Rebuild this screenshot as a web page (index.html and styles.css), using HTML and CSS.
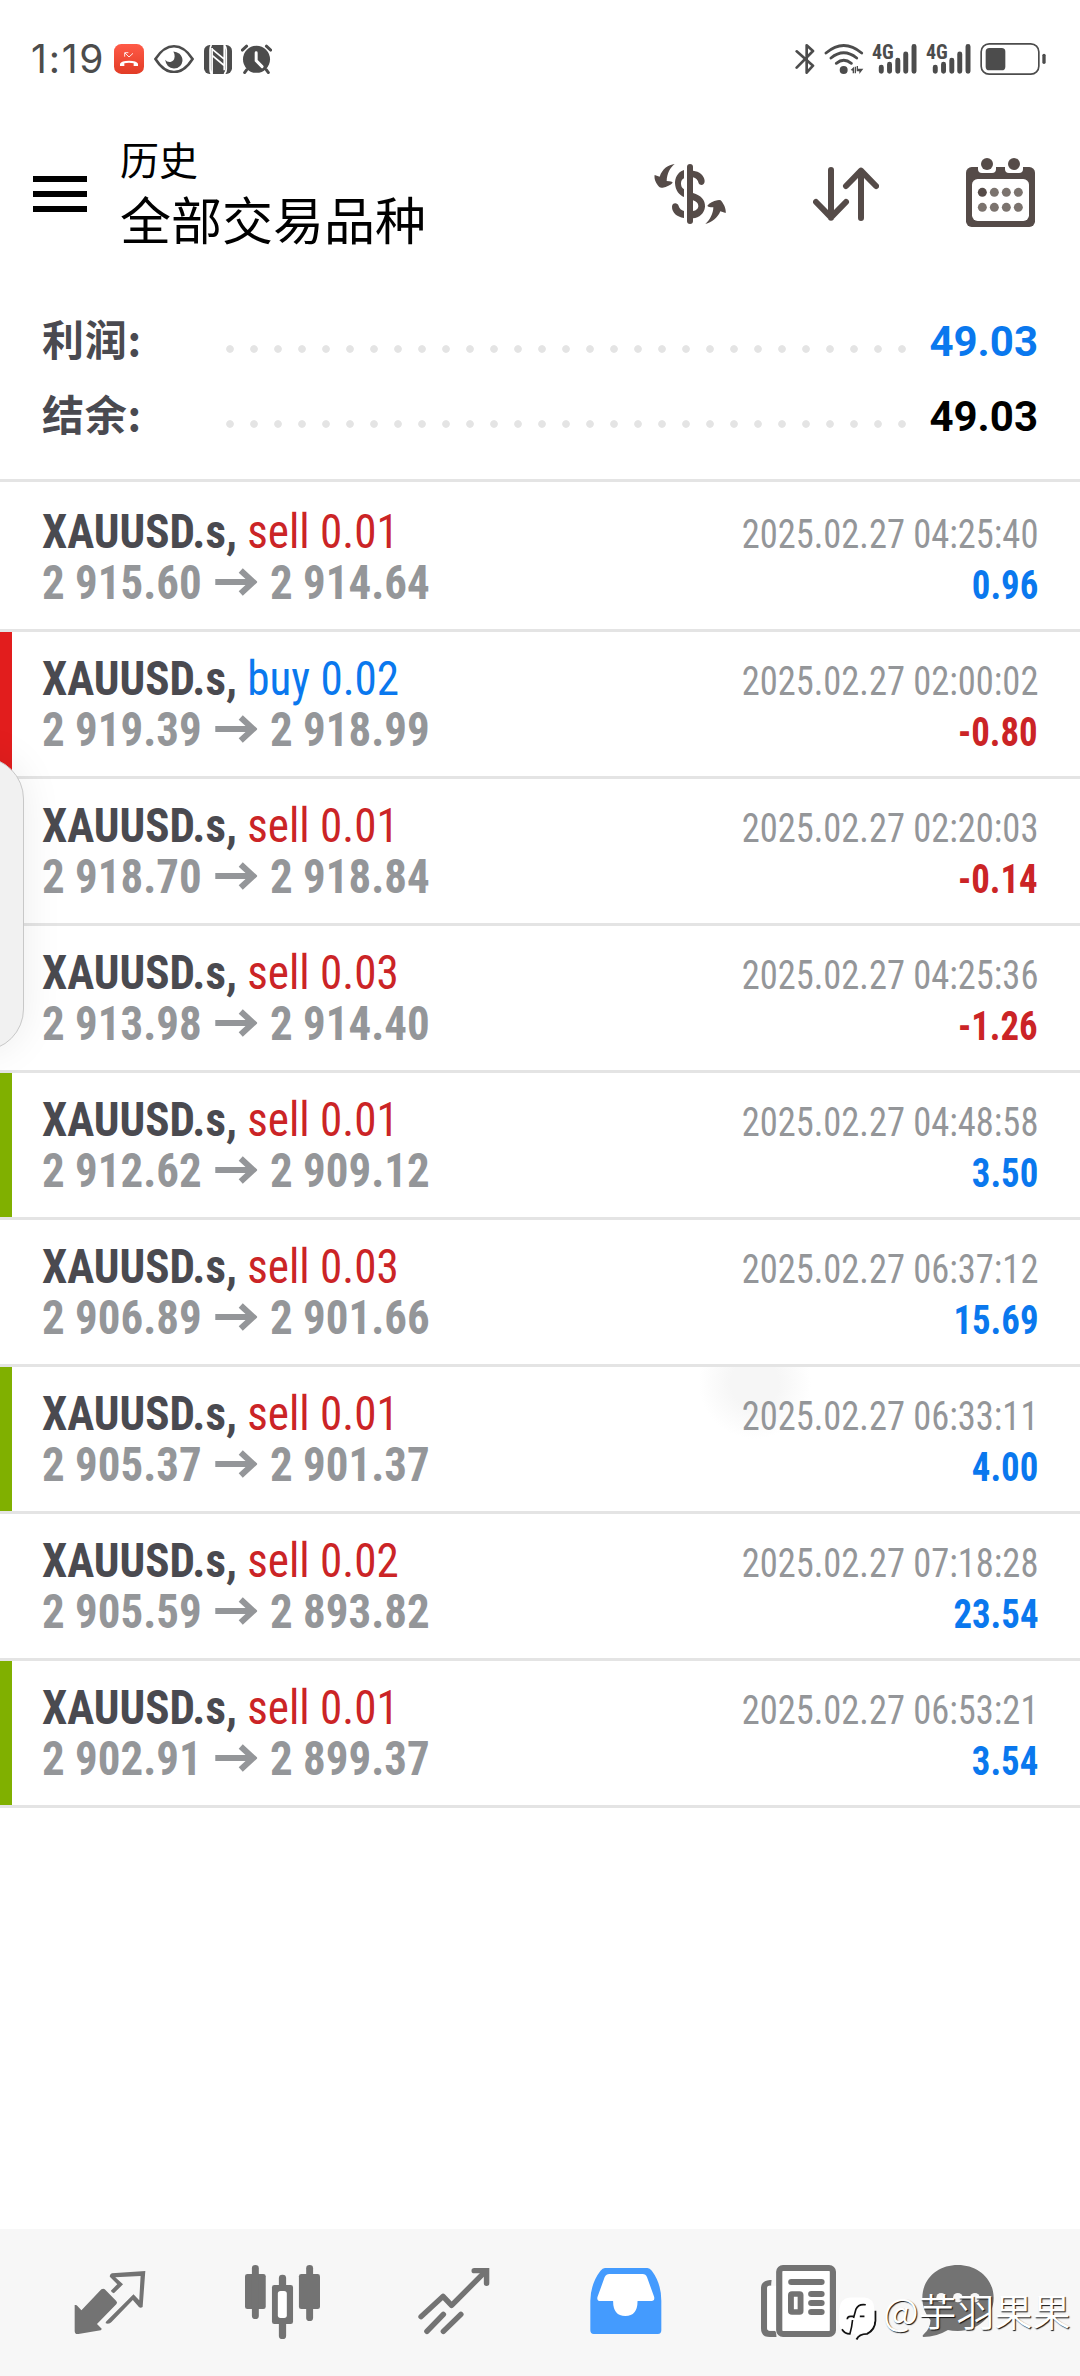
FILE: index.html
```
<!DOCTYPE html>
<html lang="zh-CN">
<head>
<meta charset="utf-8">
<title>历史</title>
<link rel="stylesheet" href="styles.css">
</head>
<body>
<svg class="defs"><symbol id="arrow" viewBox="0 0 42 28" preserveAspectRatio="none"><path d="M0 14h38M25.500 2.500L38 14 25.500 25.500"/></symbol></svg>
<div class="app">
  <div class="status">
    <span class="clock">1:19</span>
    <svg class="st-call" viewBox="282 42 90 90"><defs><linearGradient id="g" x2="0" y2="1"><stop stop-color="#ff5a47"/><stop offset="1" stop-color="#e23c26"/></linearGradient></defs><rect x="282" y="42" width="90" height="90" rx="22" fill="url(#g)"/><path d="M300 108v-7q4-9 27-9t27 9v7h-13v-8q-14-4-28 0v8z" fill="#fff"/><path d="M314 80V68h11M315 69l12 12 12-11" fill="none" stroke="#fff" stroke-width="2.6"/></svg>
    <svg class="st-eye" viewBox="401 43 122 86"><path d="M405 86Q430 47 462 47T519 86Q494 126 462 126T405 86Z" fill="none" stroke="#4c4c4c" stroke-width="8"/><path d="M460 63Q470 64 479 70Q489 80 488 92Q485 114 462 115Q438 113 435 88Q440 96 451 95Q463 92 464 78Q464 70 460 63Z" fill="#4c4c4c"/></svg>
    <svg class="st-nfc" viewBox="551 44 83 86"><rect x="551" y="44" width="83" height="86" rx="17" fill="#4c4c4c"/><path d="M573 44q-4 5-4 15v56q0 9 4 15M611 44q6 5 6 15v56q0 9-6 15M575 56l35 29M575 75l35 29M575 53v77M611 44v75" fill="none" stroke="#fff" stroke-width="5"/></svg>
    <svg class="st-alarm" viewBox="663 42 94 90"><circle cx="710" cy="88" r="41" fill="#4c4c4c"/><path d="M667 60l13-12M753 60l-13-12M680 120l-6 8M740 120l6 8" stroke="#4c4c4c" stroke-width="9" stroke-linecap="round"/><path d="M709 68v24l18 18" fill="none" stroke="#fff" stroke-width="9" stroke-linecap="round"/></svg>
    <span class="grow"></span>
    <svg class="st-bt" viewBox="523 69 60 96"><path d="M528 94l49 43-19 21v-82l19 17-49 50" fill="none" stroke="#4c4c4c" stroke-width="8" stroke-linecap="round" stroke-linejoin="round"/></svg>
    <svg class="st-wifi" viewBox="610 69 120 96"><g fill="none" stroke="#4c4c4c" stroke-width="8.5" stroke-linecap="round"><path d="M616 99q53-45 107 0M631 114q38-31 77 0M647 130q22-18 45 0"/></g><circle cx="669" cy="150" r="12" fill="#4c4c4c"/><path d="M690 150l10-10v20h-4v-8zM708 138h4v8h16l-12 16v-8h-8zM702 140h4v20h-4z" fill="#4c4c4c"/></svg>
    <svg class="st-sig" viewBox="754 69 136 96"><text class="net" x="754" y="117" textLength="66" lengthAdjust="spacingAndGlyphs">4G</text><g stroke="#4c4c4c" stroke-width="15" stroke-linecap="round"><path d="M782 142v12M807 133v21M832 121v33M856 102v52M881 79v75"/></g></svg>
    <svg class="st-sig" viewBox="754 69 136 96"><text class="net" x="754" y="117" textLength="66" lengthAdjust="spacingAndGlyphs">4G</text><g stroke="#4c4c4c" stroke-width="15" stroke-linecap="round"><path d="M782 142v12M807 133v21M832 121v33M856 102v52M881 79v75"/></g></svg>
    <svg class="st-bat" viewBox="1078 69 198 96"><rect x="1081.500" y="71.500" width="173" height="91" rx="24" fill="none" stroke="#4c4c4c" stroke-width="5"/><rect x="1095" y="84" width="59" height="67" rx="11" fill="#4c4c4c"/><rect x="1265" y="101" width="10" height="31" rx="5" fill="#4c4c4c"/></svg>
  </div>

  <header class="header">
    <div class="menu"><i></i><i></i><i></i></div>
    <div class="titles"><div class="sub">历史</div><div class="main">全部交易品种</div></div>
    <svg class="h-dollar" viewBox="102 432 216 180"><g fill="#554b48"><rect x="201" y="432" width="18" height="180" rx="9"/><path d="M192 450C171 457 165 475 165 490C166 512 178 526 192 531V508C185 504 183 497 183 490C183 482 187 477 192 475ZM219 452C238 454 253 466 254 483C254 497 240 498 236 490C234 480 228 474 219 472ZM219 519C243 526 256 540 255 560C253 580 238 593 219 595V573C228 572 235 566 235 558C235 550 229 545 219 541ZM192 594C170 590 156 578 156 560C156 547 173 546 176 558C178 566 184 571 192 573Z"/><path d="M164 432C145 434 127 446 119 470L104 465C101 480 112 495 119 502Q122 504 128 503C140 500 152 495 158 488Q157 484 140 483C141 460 150 444 164 432ZM256 612C275 608 293 594 301 574L317 579C319 565 310 550 302 541Q298 539 292 541C280 543 268 550 262 557Q264 562 280 562C280 580 270 600 256 612Z"/></g></svg>
    <svg class="h-sort" viewBox="579 441 198 162"><path d="M633 450v143M588 546l45 46 45-46M723 594V452M678 498l45-46 45 46" fill="none" stroke="#554b48" stroke-width="18" stroke-linecap="round" stroke-linejoin="round"/></svg>
    <svg class="h-cal" viewBox="1038 414 207 207"><rect x="1038" y="441" width="207" height="180" rx="17" fill="#554b48"/><path d="M1074 440v8q0 11 12 11h30q12 0 12-11v-8zM1155 440v8q0 11 12 11h30q12 0 12-11v-8z" fill="#fff"/><rect x="1056" y="477" width="171" height="126" rx="17" fill="#fff"/><g fill="#554b48"><circle cx="1101" cy="432" r="18"/><circle cx="1182" cy="432" r="18"/><circle cx="1087" cy="517" r="13.500"/></g><g fill="#7b736e"><circle cx="1123" cy="517" r="13.500"/><circle cx="1159" cy="517" r="13.500"/><circle cx="1195" cy="517" r="13.500"/><circle cx="1087" cy="562" r="13.500"/><circle cx="1123" cy="562" r="13.500"/><circle cx="1159" cy="562" r="13.500"/><circle cx="1195" cy="562" r="13.500"/></g></svg>
  </header>

  <section class="summary">
    <div class="sum"><span class="label">利润:</span><span class="dots"></span><span class="val blue">49.03</span></div>
    <div class="sum"><span class="label">结余:</span><span class="dots"></span><span class="val">49.03</span></div>
  </section>

  <main class="list">
    <div class="row"><div class="line"><span class="sym">XAUUSD.s, <span class="side red">sell 0.01</span></span><span class="date">2025.02.27 04:25:40</span></div><div class="line"><span class="price">2 915.60<svg class="arr"><use href="#arrow"/></svg>2 914.64</span><span class="pl blue">0.96</span></div></div>
    <div class="row mark-red"><div class="line"><span class="sym">XAUUSD.s, <span class="side blue">buy 0.02</span></span><span class="date">2025.02.27 02:00:02</span></div><div class="line"><span class="price">2 919.39<svg class="arr"><use href="#arrow"/></svg>2 918.99</span><span class="pl red">-0.80</span></div></div>
    <div class="row"><div class="line"><span class="sym">XAUUSD.s, <span class="side red">sell 0.01</span></span><span class="date">2025.02.27 02:20:03</span></div><div class="line"><span class="price">2 918.70<svg class="arr"><use href="#arrow"/></svg>2 918.84</span><span class="pl red">-0.14</span></div></div>
    <div class="row"><div class="line"><span class="sym">XAUUSD.s, <span class="side red">sell 0.03</span></span><span class="date">2025.02.27 04:25:36</span></div><div class="line"><span class="price">2 913.98<svg class="arr"><use href="#arrow"/></svg>2 914.40</span><span class="pl red">-1.26</span></div></div>
    <div class="row mark-green"><div class="line"><span class="sym">XAUUSD.s, <span class="side red">sell 0.01</span></span><span class="date">2025.02.27 04:48:58</span></div><div class="line"><span class="price">2 912.62<svg class="arr"><use href="#arrow"/></svg>2 909.12</span><span class="pl blue">3.50</span></div></div>
    <div class="row"><div class="line"><span class="sym">XAUUSD.s, <span class="side red">sell 0.03</span></span><span class="date">2025.02.27 06:37:12</span></div><div class="line"><span class="price">2 906.89<svg class="arr"><use href="#arrow"/></svg>2 901.66</span><span class="pl blue">15.69</span></div></div>
    <div class="row mark-green touch"><div class="line"><span class="sym">XAUUSD.s, <span class="side red">sell 0.01</span></span><span class="date">2025.02.27 06:33:11</span></div><div class="line"><span class="price">2 905.37<svg class="arr"><use href="#arrow"/></svg>2 901.37</span><span class="pl blue">4.00</span></div></div>
    <div class="row"><div class="line"><span class="sym">XAUUSD.s, <span class="side red">sell 0.02</span></span><span class="date">2025.02.27 07:18:28</span></div><div class="line"><span class="price">2 905.59<svg class="arr"><use href="#arrow"/></svg>2 893.82</span><span class="pl blue">23.54</span></div></div>
    <div class="row mark-green"><div class="line"><span class="sym">XAUUSD.s, <span class="side red">sell 0.01</span></span><span class="date">2025.02.27 06:53:21</span></div><div class="line"><span class="price">2 902.91<svg class="arr"><use href="#arrow"/></svg>2 899.37</span><span class="pl blue">3.54</span></div></div>
  </main>

  <nav class="nav">
    <svg viewBox="213 165 213 222" preserveAspectRatio="none"><path d="M294 238q6-3 10 0l34 35q5 5 0 10l-57 59 14 14q-1 4-3 5l-66 11q-11 2-11-9v-78q4-1 6 1l14 15z" fill="#737373"/><path d="M424 183L416 291Q410 296 405 291L387 270 324 336Q318 343 307 340Q306 337 309 334L389 253 406 271 410 198 335 202 358 223 331 250Q324 247 322 242L341 223 319 200Q318 193 325 190Z" fill="#737373"/></svg>
    <svg class="wide" viewBox="709 165 217 222" preserveAspectRatio="none"><g fill="#737373"><rect x="709" y="192" width="60" height="105" rx="7"/><rect x="729" y="165" width="20" height="162" rx="10"/><rect x="865" y="192" width="61" height="105" rx="7"/><rect x="886" y="165" width="20" height="168" rx="10"/><rect x="787" y="225" width="61" height="117" rx="7"/><rect x="807" y="194" width="21" height="50" rx="10"/><rect x="807" y="320" width="21" height="67" rx="10"/></g><rect x="804" y="243" width="26" height="81" rx="8" fill="#fff"/></svg>
    <svg viewBox="1212 165 210 222" preserveAspectRatio="none"><g fill="none" stroke="#737373" stroke-width="16" stroke-linecap="round" stroke-linejoin="round"><path d="M1221 320l64-61 25 27 98-101"/><path d="M1376 182h36v38M1238 364l48-51M1286 364l51-51" stroke-linejoin="miter"/></g></svg>
    <svg viewBox="146 165 212 222" preserveAspectRatio="none"><path d="M190 174H315Q322 174 328 182Q356 220 356 272V361Q356 372 346 372H157Q147 372 147 361V272Q148 220 177 182Q183 174 190 174Z" fill="#449bfe"/><path d="M203 192H301Q310 192 314 202L335 261Q337 273 327 273H286Q286 318 250 318T214 273H177Q165 273 168 261L189 202Q194 192 203 192Z" fill="#fff"/></svg>
    <svg class="wide" viewBox="646 165 218 222" preserveAspectRatio="none"><path d="M672 210H678L676 227H669Q664 227 664 235V354Q664 362 672 362H686Q690 362 691 381H672Q646 381 646 355V235Q646 212 672 210Z" fill="#737373"/><path d="M664 235q0-8 8-8h18v135h-18q-8 0-8-8z" fill="#fff"/><path d="M677 205h13v22h-14z" fill="#f7f7f7"/><rect x="699" y="174" width="156" height="198" rx="11" fill="#fff" stroke="#737373" stroke-width="18"/><path d="M734 216h88M792 252h30M792 279h30M792 306h30" stroke="#737373" stroke-width="18" stroke-linecap="round"/><rect x="733" y="252" width="28" height="54" rx="3" fill="#fff" stroke="#737373" stroke-width="17"/></svg>
    <svg class="chat" viewBox="1108 165 211 222" preserveAspectRatio="none"><path d="M1213 165C1270 165 1318 205 1318 264C1318 320 1272 363 1213 363Q1195 363 1184 360Q1150 381 1112 381Q1107 379 1113 373Q1132 357 1133 331Q1109 302 1109 264C1109 205 1155 165 1213 165Z" fill="#737373"/><g fill="#f7f7f7"><circle cx="1164" cy="263" r="14"/><circle cx="1213" cy="263" r="14"/><circle cx="1263" cy="263" r="14"/></g></svg>
  </nav>

  <div class="handle"></div>
  <div class="mark">
    <svg class="logo" viewBox="54 76 118 138"><path d="M167 120V150Q166 178 142 190Q118 190 110 207" fill="none" stroke="#111" stroke-width="6"/><path d="M90 80H134Q164 82 164 116V150Q162 176 138 186Q114 186 107 204Q104 196 108 190H92L84 190Q60 182 58 158V116Q60 82 90 80Z" fill="#fff"/><path d="M138 102Q116 98 108 116L101 142M82 146Q82 137 92 137H104M120 137H134M98 148Q96 170 90 190Q74 190 66 176" fill="none" stroke="#111" stroke-width="5"/></svg>
    <span>@芋羽果果</span>
  </div>
</div>
</body>
</html>
```
FILE: styles.css
```
* { box-sizing: border-box; }
body { margin: 0; background: #fff; }
svg { display: block; flex: none; }
.defs { display: none; }
.app {
  position: relative; width: 1080px; height: 2376px; overflow: hidden;
  display: flex; flex-direction: column; background: #fff;
  font-family: "Roboto", "Noto Sans CJK SC", sans-serif; color: #000;
}
.grow { flex: 1; }

.status { height: 118px; padding: 0 34px 0 31px; display: flex; align-items: center; color: #4c4c4c; }
.clock { width: 83px; font: 400 39px/40px "Inter", sans-serif; letter-spacing: 1.8px; white-space: nowrap; }
.st-call { width: 30px; height: 30px; margin-right: 10px; }
.st-eye { width: 40px; height: 28px; margin-right: 10px; }
.st-nfc { width: 28px; height: 29px; margin-right: 9px; }
.st-alarm { width: 31px; height: 30px; }
.st-bt { width: 20px; height: 32px; margin-right: 9px; }
.st-wifi { width: 40px; height: 32px; margin-right: 8px; }
.st-sig { width: 45px; height: 32px; margin-right: 9px; overflow: visible; }
.st-bat { width: 66px; height: 32px; }
.net { font: 700 62px "Roboto Condensed", "Roboto", sans-serif; fill: #4c4c4c; }

.header { height: 152px; padding: 0 45px 0 33px; display: flex; align-items: center; }
.menu { width: 54px; display: flex; flex-direction: column; gap: 9px; margin-right: 33px; }
.menu i { height: 6px; background: #000; }
.titles { flex: 1; margin-bottom: 8px; font-family: "Noto Sans CJK SC", sans-serif; }
.sub { font-size: 39px; line-height: 50px; }
.main { font-size: 51px; line-height: 60px; margin-top: 5px; }
.h-dollar { width: 72px; height: 60px; margin-right: 87px; }
.h-sort { width: 66px; height: 54px; margin-right: 87px; }
.h-cal { width: 69px; height: 69px; margin-top: -3px; }

.summary { padding: 34px 42px 25px; border-bottom: 3px solid #e4e4e4; }
.sum { display: flex; align-items: center; height: 75px; font-size: 42px; font-weight: 700; line-height: 75px; }
.label { width: 176px; margin-bottom: 8px; color: #4a4a50; font-family: "Noto Sans CJK SC", sans-serif; letter-spacing: .8px; }
.dots { flex: 1; height: 8px; margin-top: 15px; background: radial-gradient(circle at 12px 4px, #e4e4e4 3.4px, transparent 4.2px) 0 0 / 24px 8px repeat-x; }
.val { width: 124px; text-align: right; }
.blue { color: #0a78ee; }
.red { color: #cb2426; }

.list { flex: 1; padding-top: 3px; font-family: "Roboto Condensed", "Roboto", sans-serif; }
.row { height: 147px; padding: 21px 42px 0 42px; border-bottom: 3px solid #e4e4e4; white-space: nowrap; }
.line { display: flex; justify-content: space-between; align-items: baseline; height: 51px; line-height: 51px; }
.sym { font-size: 48px; font-weight: 700; color: #4a4a50; transform: scaleX(.939); transform-origin: 0 0; }
.side { font-weight: 400; }
.price { display: flex; align-items: baseline; font-size: 48px; font-weight: 700; color: #949699; transform: scaleX(.936); transform-origin: 0 0; }
.arr { width: 45px; height: 28px; margin: 0 14px; transform: translateY(-3px); fill: none; stroke: #949699; stroke-width: 6px; overflow: visible; }
.date { font-size: 40px; color: #949699; transform: scaleX(.912); transform-origin: 100% 0; }
.pl { font-size: 40px; font-weight: 700; transform: scaleX(.92); transform-origin: 100% 0; }
.mark-red { background: linear-gradient(#e21d1d, #e21d1d) 0 0 / 12px 144px no-repeat; }
.mark-green { background: linear-gradient(#80b000, #80b000) 0 0 / 12px 144px no-repeat; }
.touch { background: linear-gradient(#80b000, #80b000) 0 0 / 12px 144px no-repeat, radial-gradient(circle at 755px 16px, #f6f6f6 24px, #fff 56px); background-clip: padding-box; }

.nav { height: 147px; padding: 36px 24px 0; background: #f7f7f7; display: grid; grid-template-columns: repeat(6, 172px); justify-items: center; }
.nav svg { width: 72px; height: 74px; }
.nav .wide { width: 75px; }
.nav .chat { margin-right: 24px; }

.handle { position: absolute; left: -60px; top: 757px; width: 84px; height: 294px; border-radius: 42px; background: #f1f1f1; border: 1px solid #c8c8c8; box-shadow: 0 0 40px rgba(0,0,0,.08); }
.mark { position: absolute; left: 838px; top: 2287px; display: flex; color: #fff; font: 350 38px/46px "Noto Sans CJK SC", sans-serif; text-shadow: 1px 1px 1px #111; white-space: nowrap; }
.logo { width: 39px; height: 46px; margin: 9px 6px 0 0; }
```
